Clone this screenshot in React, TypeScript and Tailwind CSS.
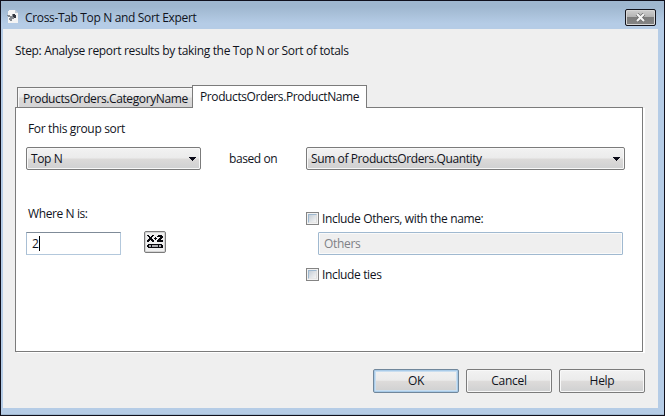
import React from "react";

function Label({ children, className = "" }: { children: React.ReactNode; className?: string }) {
  return <span className={`block whitespace-pre leading-4 ${className}`}>{children}</span>;
}

function Select({ value, className }: { value: string; className: string }) {
  return (
    <div className={`flex h-[23px] items-center justify-between rounded-[2px] border border-[#7b7b7b] bg-[linear-gradient(#f2f2f2_0%,#ebebeb_48%,#dcdad9_52%,#cfd0d1_100%)] pr-1 pl-1 shadow-[inset_0_0_0_1px_#f8f8f8] ${className}`}>
      <Label className="tracking-[-0.4px]">{value}</Label>
      <svg width="7" height="4" viewBox="0 0 7 4" shapeRendering="crispEdges"><path d="M0 0h7v1H6v1H5v1H4v1H3V3H2V2H1V1H0z" fill="#0b0b18" /></svg>
    </div>
  );
}

function CheckBox({ label }: { label: string }) {
  return (
    <div className="flex h-[13px] items-center gap-[3px]">
      <span className="size-[13px] shrink-0 border border-[#848484] bg-[#f2f2f2] p-[1px]">
        <span className="block size-[9px] border border-t-[#9db8d0] border-r-[#dedede] border-b-[#e6e6e6] border-l-[#9db8d0] bg-linear-to-br from-[#c6ced6] to-[#f4f4f4]" />
      </span>
      <Label className="tracking-[-0.36px]">{label}</Label>
    </div>
  );
}

function Button({ label, primary = false }: { label: string; primary?: boolean }) {
  const ring = primary
    ? "border-[#71879b] shadow-[inset_0_0_0_1px_#a9cbe8,inset_0_0_0_2px_#c9def0]"
    : "border-[#7b7b7b] shadow-[inset_0_0_0_1px_#f8f8f8]";
  return (
    <button className={`flex h-6 w-[86px] items-center justify-center rounded-[2px] border bg-[linear-gradient(#f2f2f2_0%,#ebebeb_46%,#dddbda_52%,#cfd0d1_100%)] ${ring}`}>
      <Label>{label}</Label>
    </button>
  );
}

function ReportIcon() {
  return (
    <svg width="13" height="15" viewBox="0 0 13 15" shapeRendering="crispEdges">
      <path d="M2 1h6l3 3v10H1V2h1z" fill="#f4f4f4" />
      <path d="M8 1l3 3H8z" fill="#c3ccd6" />
      <path d="M0 6h3v1h2V5h2v1h2v3H7v1H5v2H3v-1H2V9h1V8H1V7H0z" fill="#85898f" />
      <path d="M6 5h2v1h1v3H7V8H6z" fill="#33373f" />
    </svg>
  );
}

function FormulaIcon() {
  return (
    <svg width="17" height="14" viewBox="0 0 17 14" shapeRendering="crispEdges" fill="#07070c">
      <path d="M0 0h2v1h1v1h1V1h1V0h2v1H6v1H5v1H5v1h1v1h1v2H5V6H4V5H3v1H2v1H0V5h1V4h1V2H1V1H0z" />
      <path d="M8 2h1v1h1v1H9v1H8V4H7V3h1z" />
      <path d="M11 0h4v1h1v2h-1v1h-1v1h2v2h-6V5h1V4h1V3h1V2h-1v0h-2V1h1z" />
      <path d="M1 9h14v1h1v3H1v-1H0v-2h1z" />
      <path d="M2 10h2v2H2zM5 10h6v2H5zM12 10h2v2h-2z" fill="#a9a9ad" />
    </svg>
  );
}

export default function App() {
  return (
    <div className="flex h-[416px] w-[665px] flex-col border border-[#10101c] bg-[#b5cce6] font-['Open_Sans','Noto_Sans',sans-serif] text-[12px] tracking-[-0.3px] text-[#10131c]">
      <header className="flex h-7 shrink-0 justify-between bg-[linear-gradient(#9fb7cf_0%,#9fb7cf_20%,#b5cce6_80%)] pr-[8px] pl-[6px]">
        <div className="flex gap-[5px] pt-[8px]">
          <ReportIcon />
          <Label className="pt-px tracking-[-0.34px]">Cross-Tab Top N and Sort Expert</Label>
        </div>
        <button className="mt-2 flex h-[17px] w-[31px] items-center justify-center rounded-[2px] border border-[#14141c] bg-[linear-gradient(#cfcfcf_0%,#b4b4b4_45%,#7c7c7c_50%,#858585_100%)] shadow-[inset_0_0_0_1px_#d6d6d6]">
          <svg width="11" height="9" viewBox="0 0 11 9"><path d="M2 1l7 7M9 1L2 8" stroke="#666" strokeWidth="3.5" /><path d="M2 1l7 7M9 1L2 8" stroke="#f4f4f4" strokeWidth="2.2" /></svg>
        </button>
      </header>
      <main className="mr-[6px] ml-[2px] flex h-[379px] flex-col bg-[#efefef] pl-3">
        <Label className="mt-[14px] tracking-[-0.33px]">Step: Analyse report results by taking the Top N or Sort of totals</Label>
        <nav className="z-10 mt-[26px] flex h-[23px] items-end pl-[2px]">
          <div className="mb-[1px] h-5 w-[175px] border border-r-0 border-b-0 border-[#7b7b7b] bg-[linear-gradient(#f2f2f2_0%,#ebebeb_48%,#dcdad9_52%,#d4d4d5_100%)] pt-[3px] pl-[5px] shadow-[inset_1px_1px_0_#f8f8f8]"><Label className="tracking-[-0.39px]">ProductsOrders.CategoryName</Label></div>
          <div className="h-[23px] w-[175px] border border-b-0 border-[#7b7b7b] bg-white pt-[3px] pl-[7px]"><Label className="tracking-[-0.4px]">ProductsOrders.ProductName</Label></div>
        </nav>
        <section className="-mt-px h-[245px] w-[628px] border border-[#7b7b7b] bg-white pt-[13px] pl-[10px] shadow-[2px_1px_0_#fff]">
          <Label className="pl-[2px] tracking-[-0.35px]">For this group sort</Label>
          <div className="mt-[10px] flex items-center">
            <Select value="Top N" className="w-[175px]" />
            <Label className="ml-[28px] w-[77px] tracking-[-0.4px]">based on</Label>
            <Select value="Sum of ProductsOrders.Quantity" className="w-[319px]" />
          </div>
          <div className="mt-[35px] flex">
            <div className="w-[280px] pt-px">
              <Label className="pl-[2px] tracking-[-0.4px]">Where N is:</Label>
              <div className="mt-[10px] flex">
                <div className="flex h-[23px] w-[95px] items-center border border-t-[#7f8b98] border-r-[#b3c8dc] border-b-[#b3c8dc] border-l-[#a9bfd4] pl-[5px]">
                  <Label>2</Label><span className="h-[15px] w-px bg-black" />
                </div>
                <button className="-mt-px ml-[23px] flex h-[22px] w-[22px] items-center justify-center rounded-[2px] border border-[#7b7b7b] bg-[#f0f0f0] shadow-[inset_0_0_0_1px_#d4d4d4]"><FormulaIcon /></button>
              </div>
            </div>
            <div className="pt-[7px]">
              <CheckBox label="Include Others, with the name:" />
              <div className="mt-[7px] mb-[13px] ml-3 flex h-[23px] w-[305px] items-center rounded-[1px] border border-[#a0b9d0] bg-[#efefef] pl-[5px] text-[#808186] shadow-[inset_0_0_0_1px_#fafafa]"><Label>Others</Label></div>
              <CheckBox label="Include ties" />
            </div>
          </div>
        </section>
        <footer className="mt-[17px] flex justify-end gap-[7px] pr-[13px]">
          <Button label="OK" primary />
          <Button label="Cancel" />
          <Button label="Help" />
        </footer>
      </main>
      <div className="mt-[6px] h-px bg-[#9fb7cf]" />
    </div>
  );
}
